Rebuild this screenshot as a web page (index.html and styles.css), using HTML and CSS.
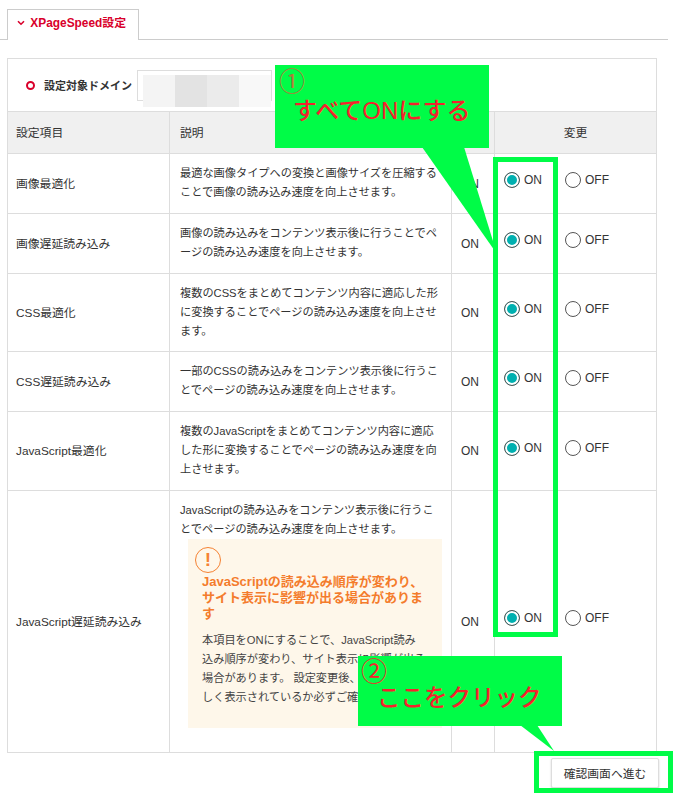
FILE: index.html
```html
<!DOCTYPE html>
<html lang="ja">
<head>
  <meta charset="UTF-8">
  <meta name="viewport" content="width=device-width, initial-scale=1.0">
  <title>XPageSpeed設定</title>
  <link rel="stylesheet" href="styles.css">
</head>
<body>
  <div class="tabs">
    <div class="tab">
      <svg class="tab-arrow" width="8" height="6" viewBox="0 0 8 6"><path d="M1 1.2 L4 4.2 L7 1.2" fill="none" stroke="#d9002b" stroke-width="1.6"/></svg>
      XPageSpeed設定
    </div>
  </div>

  <table class="settings">
    <colgroup>
      <col class="col-name">
      <col class="col-desc">
      <col class="col-now">
      <col class="col-change">
    </colgroup>
    <tr class="domain-row">
      <td colspan="4">
        <div class="domain">
          <span class="domain-mark"></span>
          <span class="domain-label">設定対象ドメイン</span>
          <span class="domain-box">
            <span class="blur b1"></span><span class="blur b2"></span><span class="blur b3"></span><span class="blur b4"></span>
          </span>
        </div>
      </td>
    </tr>
    <tr class="head-row">
      <th>設定項目</th>
      <th class="head-desc">説明</th>
      <th></th>
      <th class="head-change">変更</th>
    </tr>
    <tr>
      <td>画像最適化</td>
      <td class="desc">最適な画像タイプへの変換と画像サイズを圧縮することで画像の読み込み速度を向上させます。</td>
      <td class="now">ON</td>
      <td><div class="radios"><span class="radio on"></span><span class="radio-label">ON</span><span class="radio"></span><span class="radio-label">OFF</span></div></td>
    </tr>
    <tr>
      <td>画像遅延読み込み</td>
      <td class="desc">画像の読み込みをコンテンツ表示後に行うことでページの読み込み速度を向上させます。</td>
      <td class="now">ON</td>
      <td><div class="radios"><span class="radio on"></span><span class="radio-label">ON</span><span class="radio"></span><span class="radio-label">OFF</span></div></td>
    </tr>
    <tr>
      <td>CSS最適化</td>
      <td class="desc desc-tight">複数のCSSをまとめてコンテンツ内容に適応した形に変換することでページの読み込み速度を向上させます。</td>
      <td class="now">ON</td>
      <td><div class="radios"><span class="radio on"></span><span class="radio-label">ON</span><span class="radio"></span><span class="radio-label">OFF</span></div></td>
    </tr>
    <tr>
      <td>CSS遅延読み込み</td>
      <td class="desc">一部のCSSの読み込みをコンテンツ表示後に行うことでページの読み込み速度を向上させます。</td>
      <td class="now">ON</td>
      <td><div class="radios"><span class="radio on"></span><span class="radio-label">ON</span><span class="radio"></span><span class="radio-label">OFF</span></div></td>
    </tr>
    <tr>
      <td>JavaScript最適化</td>
      <td class="desc">複数のJavaScriptをまとめてコンテンツ内容に適応した形に変換することでページの読み込み速度を向上させます。</td>
      <td class="now">ON</td>
      <td><div class="radios"><span class="radio on"></span><span class="radio-label">ON</span><span class="radio"></span><span class="radio-label">OFF</span></div></td>
    </tr>
    <tr>
      <td>JavaScript遅延読み込み</td>
      <td class="desc desc-notice">
        JavaScriptの読み込みをコンテンツ表示後に行うことでページの読み込み速度を向上させます。
        <div class="notice">
          <span class="notice-icon">!</span>
          <p class="notice-title">JavaScriptの読み込み順序が変わり、サイト表示に影響が出る場合があります</p>
          <p class="notice-text">本項目をONにすることで、JavaScript読み込み順序が変わり、サイト表示に影響が出る場合があります。 設定変更後、サイトが正しく表示されているか必ずご確認ください。</p>
        </div>
      </td>
      <td class="now">ON</td>
      <td><div class="radios"><span class="radio on"></span><span class="radio-label">ON</span><span class="radio"></span><span class="radio-label">OFF</span></div></td>
    </tr>
  </table>

  <div class="actions">
    <button class="confirm">確認画面へ進む</button>
  </div>

  <!-- annotations on top of the screenshot -->
  <div class="callout callout-one">
    <div class="callout-num">①</div>
    <div class="callout-text">すべてONにする</div>
  </div>
  <svg class="overlay" width="685" height="801" viewBox="0 0 685 801">
    <polygon points="422,147 464,147 497,254" fill="#00fc47"/>
    <polygon points="520,725 537,725 554,751" fill="#00fc47"/>
    <rect x="495.5" y="159.5" width="60" height="475" fill="none" stroke="#00fc47" stroke-width="5"/>
    <rect x="536.5" y="753.5" width="134" height="37" fill="none" stroke="#00fc47" stroke-width="5"/>
  </svg>
  <div class="callout callout-two">
    <div class="callout-num">②</div>
    <div class="callout-text">ここをクリック</div>
  </div>
</body>
</html>
```

FILE: styles.css
```css
* {
  box-sizing: border-box;
}

body {
  font-family: "Liberation Sans", "Noto Sans CJK JP", sans-serif;
  background-color: white;
  color: #333;
  margin: 0;
  padding: 9px 17px 0 0;
  width: 685px;
  height: 801px;
  overflow: hidden;
  position: relative;
}

.tabs {
  border-bottom: 1px solid #ccc;
  padding-left: 7px;
  height: 31px;
}

.tab {
  width: 132px;
  height: 31px;
  background-color: white;
  border: 1px solid #ccc;
  border-bottom: none;
  color: #d9002b;
  font-size: 11.9px;
  font-weight: bold;
  line-height: 27px;
  padding-left: 9px;
  white-space: nowrap;
}

.tab-arrow {
  margin-right: 2px;
  vertical-align: 1px;
}

.settings {
  width: 649px;
  margin: 18px 0 0 7px;
  border-collapse: collapse;
  table-layout: fixed;
  font-size: 11.8px;
}

.col-name { width: 162px; }
.col-desc { width: 282px; }
.col-now { width: 43px; }
.col-change { width: 162px; }

.settings th, .settings td {
  border: 1px solid #ddd;
  padding: 0 8px;
  font-weight: normal;
  text-align: left;
  vertical-align: middle;
}

.settings td:first-child {
  padding-bottom: 3px;
}

.settings th {
  padding-bottom: 2px;
}

.settings .head-change {
  text-align: center;
}

.settings .head-desc {
  padding-left: 10px;
}

.head-row {
  height: 42px;
  background-color: #f0f0f0;
}

.domain-row {
  height: 53px;
}

.settings .domain-row td {
  padding: 0;
}

.domain {
  display: flex;
  align-items: center;
  padding-left: 18px;
  height: 52px;
}

.domain-mark {
  width: 9px;
  height: 9px;
  border: 2.5px solid #d9002b;
  border-radius: 50%;
  margin-right: 9px;
}

.domain-label {
  font-size: 11px;
  font-weight: bold;
  margin-right: 5px;
}

.domain-box {
  display: flex;
  width: 135px;
  height: 31px;
  border: 1px solid #ddd;
  padding: 4px 0 0 5px;
}

.blur {
  width: 32px;
  height: 32px;
}

.b1 { background-color: #f4f4f4; }
.b2 { background-color: #e3e3e3; }
.b3 { background-color: #ebebeb; }
.b4 { background-color: #f8f8f8; }

.settings .desc {
  font-size: 11.2px;
  line-height: 19px;
  padding: 10px 9px 11px 10px;
}

.settings .desc-tight {
  padding-bottom: 10px;
}

.settings .desc-notice {
  padding-bottom: 24px;
}

.settings .now {
  font-size: 12px;
  padding: 0 0 0 9px;
}

.radios {
  display: flex;
  align-items: center;
  font-size: 12px;
  margin-left: 1px;
  position: relative;
  top: -3.5px;
}

.radio {
  width: 16px;
  height: 16px;
  border: 1px solid #555;
  border-radius: 50%;
  background-color: white;
  flex-shrink: 0;
  margin-right: 4px;
}

.radio.on {
  background-color: #00b0b0;
  box-shadow: inset 0 0 0 2px white;
}

.radio-label {
  width: 41px;
}

.notice {
  background-color: #fef7ea;
  margin-left: 8px;
  width: 254px;
  height: 189px;
  padding: 8px 15.5px 8px 14px;
}

.notice-icon {
  display: block;
  width: 26px;
  height: 26px;
  margin-left: -7px;
  border: 1px solid #f58233;
  border-radius: 50%;
  color: #f58233;
  font-size: 19px;
  font-weight: bold;
  line-height: 24px;
  text-align: center;
}

.notice-title {
  margin: 1px -7px 9px 0;
  color: #f47c2c;
  font-size: 13px;
  font-weight: bold;
  line-height: 16px;
}

.notice-text {
  margin: 0;
  color: #444;
  font-size: 11.2px;
  line-height: 19px;
}

.actions {
  display: flex;
  justify-content: flex-end;
  padding: 5px 9px 0 0;
}

.confirm {
  width: 108px;
  height: 30px;
  padding: 0 0 2px;
  background-color: white;
  border: 1px solid #ddd;
  border-radius: 2px;
  box-shadow: 0 1px 2px rgba(0, 0, 0, 0.2);
  color: #333;
  font-family: inherit;
  font-size: 11.8px;
}

.overlay {
  position: absolute;
  left: 0;
  top: 0;
  pointer-events: none;
}

.callout {
  position: absolute;
  background-color: #00fc47;
  color: #f5222d;
}

.callout-one {
  left: 275px;
  top: 65px;
  width: 214px;
  height: 83px;
  padding: 1px 0 0 4px;
}

.callout-two {
  left: 358px;
  top: 656px;
  width: 204px;
  height: 70px;
  padding: 0 0 0 3px;
}

.callout-num {
  font-size: 26px;
  line-height: 32px;
  height: 30px;
  color: #b0793a;
}

.callout-two .callout-num {
  color: #f5222d;
}

.callout-text {
  font-size: 24px;
  font-weight: 500;
  line-height: 30px;
  padding-left: 14px;
  white-space: nowrap;
}

.callout-two .callout-text {
  font-size: 23.5px;
  line-height: 24px;
  padding-left: 16px;
}
```
